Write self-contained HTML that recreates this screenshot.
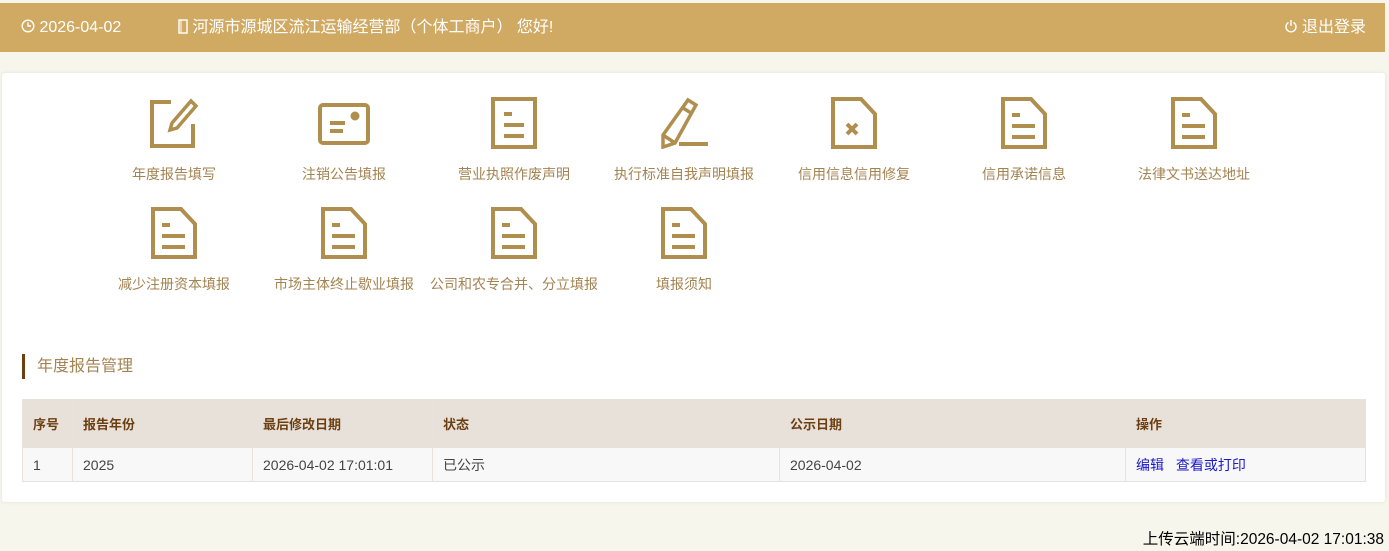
<!DOCTYPE html>
<html><head><meta charset="utf-8"><style>
*{margin:0;padding:0;box-sizing:border-box}
body{width:1389px;height:551px;background:#f7f6ec;font-family:"Liberation Sans","Noto Sans CJK SC",sans-serif;position:relative;overflow:hidden}
.hd{position:absolute;left:0;top:3px;width:1385px;height:49px;background:#d0aa62;color:#fff;font-size:16px}
.hd span{position:absolute;top:15px;line-height:20px}
.card{position:absolute;left:2px;top:73px;width:1383px;height:429px;background:#fff;border-radius:3px;box-shadow:0 0 4px rgba(0,0,0,.08)}
.it{position:absolute;width:170px;text-align:center;color:#a38351;font-size:14px}
.it svg{display:block;margin:0 auto}
.it div{margin-top:16px;line-height:18px}
.tt{position:absolute;left:20px;top:281px;border-left:3px solid #6b3f12;padding-left:12px;height:25px;line-height:25px;color:#a38351;font-size:16px}
table{position:absolute;left:20px;top:326px;border-collapse:collapse;font-size:14px;width:1344px}
th,td{border:1px solid #e7e3dc;text-align:left;padding-left:10px}
th{background:#e8e1da;color:#6b3f12;height:48px;font-weight:bold;font-size:13px}
td{background:#f8f8f8;color:#444;height:34px}
a{color:#1a1ac8;text-decoration:none;margin-right:8px}
.ft{position:absolute;right:5px;top:527px;font-size:15.5px;color:#000}
</style></head><body>
<div class="hd">
<span style="left:21px"><svg width="14" height="14" viewBox="0 0 14 14" style="vertical-align:-1px"><circle cx="7" cy="7" r="5.8" fill="none" stroke="#fff" stroke-width="1.4"/><path d="M7 3.5V7H10" fill="none" stroke="#fff" stroke-width="1.4"/></svg> 2026-04-02</span>
<span style="left:178px"><svg width="10" height="15" viewBox="0 0 10 15" style="vertical-align:-2px"><rect x="1" y="1" width="8" height="13" fill="none" stroke="#fff" stroke-width="1.4"/><path d="M3 1V14" stroke="#fff"/></svg> 河源市源城区流江运输经营部（个体工商户） 您好!</span>
<span style="right:19px"><svg width="14" height="14" viewBox="0 0 14 14" style="vertical-align:-1px"><path d="M4.5 3.5A5 5 0 1 0 9.5 3.5" fill="none" stroke="#fff" stroke-width="1.4"/><path d="M7 1V7" stroke="#fff" stroke-width="1.4"/></svg> 退出登录</span>
</div>
<div class="card">
<div class="it" style="left:87px;top:24px"><svg width="50" height="52" viewBox="0 0 50 52" fill="none" stroke="#b08f4e" stroke-width="4"><path d="M22 5H3V49H44V27"/><path d="M42 4L47 9L28 31L21 33L23 26Z" stroke-width="3.5"/></svg><div>年度报告填写</div></div>
<div class="it" style="left:257px;top:24px"><svg width="54" height="52" viewBox="0 0 54 52" fill="none" stroke="#b08f4e" stroke-width="4"><rect x="3" y="8" width="48" height="38" rx="3"/><path d="M13 26H28M13 34H26"/><circle cx="38" cy="19" r="2.5" fill="#b08f4e"/></svg><div>注销公告填报</div></div>
<div class="it" style="left:427px;top:24px"><svg width="48" height="52" viewBox="0 0 48 52" fill="none" stroke="#b08f4e" stroke-width="4"><rect x="3" y="2" width="42" height="48"/><path d="M14 17H22M14 28H34M14 39H34"/></svg><div>营业执照作废声明</div></div>
<div class="it" style="left:597px;top:24px"><svg width="52" height="52" viewBox="0 0 52 52" fill="none" stroke="#b08f4e" stroke-width="3.5"><path d="M30 3L38 8L17 46L5 50L5 38Z"/><path d="M25 11L33 16M5 38L17 46"/><path d="M21 47H50" stroke-width="4"/></svg><div>执行标准自我声明填报</div></div>
<div class="it" style="left:767px;top:24px"><svg width="48" height="52" viewBox="0 0 48 52" fill="none" stroke="#b08f4e" stroke-width="4"><path d="M3 2H31L45 17V50H3Z"/><path d="M17 27L27 37M27 27L17 37"/></svg><div>信用信息信用修复</div></div>
<div class="it" style="left:937px;top:24px"><svg width="48" height="52" viewBox="0 0 48 52" fill="none" stroke="#b08f4e" stroke-width="4"><path d="M3 2H31L45 17V50H3Z"/><path d="M12 18H20M12 29H35M12 40H35"/></svg><div>信用承诺信息</div></div>
<div class="it" style="left:1107px;top:24px"><svg width="48" height="52" viewBox="0 0 48 52" fill="none" stroke="#b08f4e" stroke-width="4"><path d="M3 2H31L45 17V50H3Z"/><path d="M12 18H20M12 29H35M12 40H35"/></svg><div>法律文书送达地址</div></div>
<div class="it" style="left:87px;top:134px"><svg width="48" height="52" viewBox="0 0 48 52" fill="none" stroke="#b08f4e" stroke-width="4"><path d="M3 2H31L45 17V50H3Z"/><path d="M12 18H20M12 29H35M12 40H35"/></svg><div>减少注册资本填报</div></div>
<div class="it" style="left:257px;top:134px"><svg width="48" height="52" viewBox="0 0 48 52" fill="none" stroke="#b08f4e" stroke-width="4"><path d="M3 2H31L45 17V50H3Z"/><path d="M12 18H20M12 29H35M12 40H35"/></svg><div>市场主体终止歇业填报</div></div>
<div class="it" style="left:427px;top:134px"><svg width="48" height="52" viewBox="0 0 48 52" fill="none" stroke="#b08f4e" stroke-width="4"><path d="M3 2H31L45 17V50H3Z"/><path d="M12 18H20M12 29H35M12 40H35"/></svg><div>公司和农专合并、分立填报</div></div>
<div class="it" style="left:597px;top:134px"><svg width="48" height="52" viewBox="0 0 48 52" fill="none" stroke="#b08f4e" stroke-width="4"><path d="M3 2H31L45 17V50H3Z"/><path d="M12 18H20M12 29H35M12 40H35"/></svg><div>填报须知</div></div>
<div class="tt">年度报告管理</div>
<table>
<tr><th style="width:50px">序号</th><th style="width:180px">报告年份</th><th style="width:180px">最后修改日期</th><th style="width:347px">状态</th><th style="width:346px">公示日期</th><th>操作</th></tr>
<tr><td>1</td><td>2025</td><td>2026-04-02 17:01:01</td><td>已公示</td><td>2026-04-02</td><td><a>编辑</a> <a>查看或打印</a></td></tr>
</table>
</div>
<div class="ft">上传云端时间:2026-04-02 17:01:38</div>
</body></html>
